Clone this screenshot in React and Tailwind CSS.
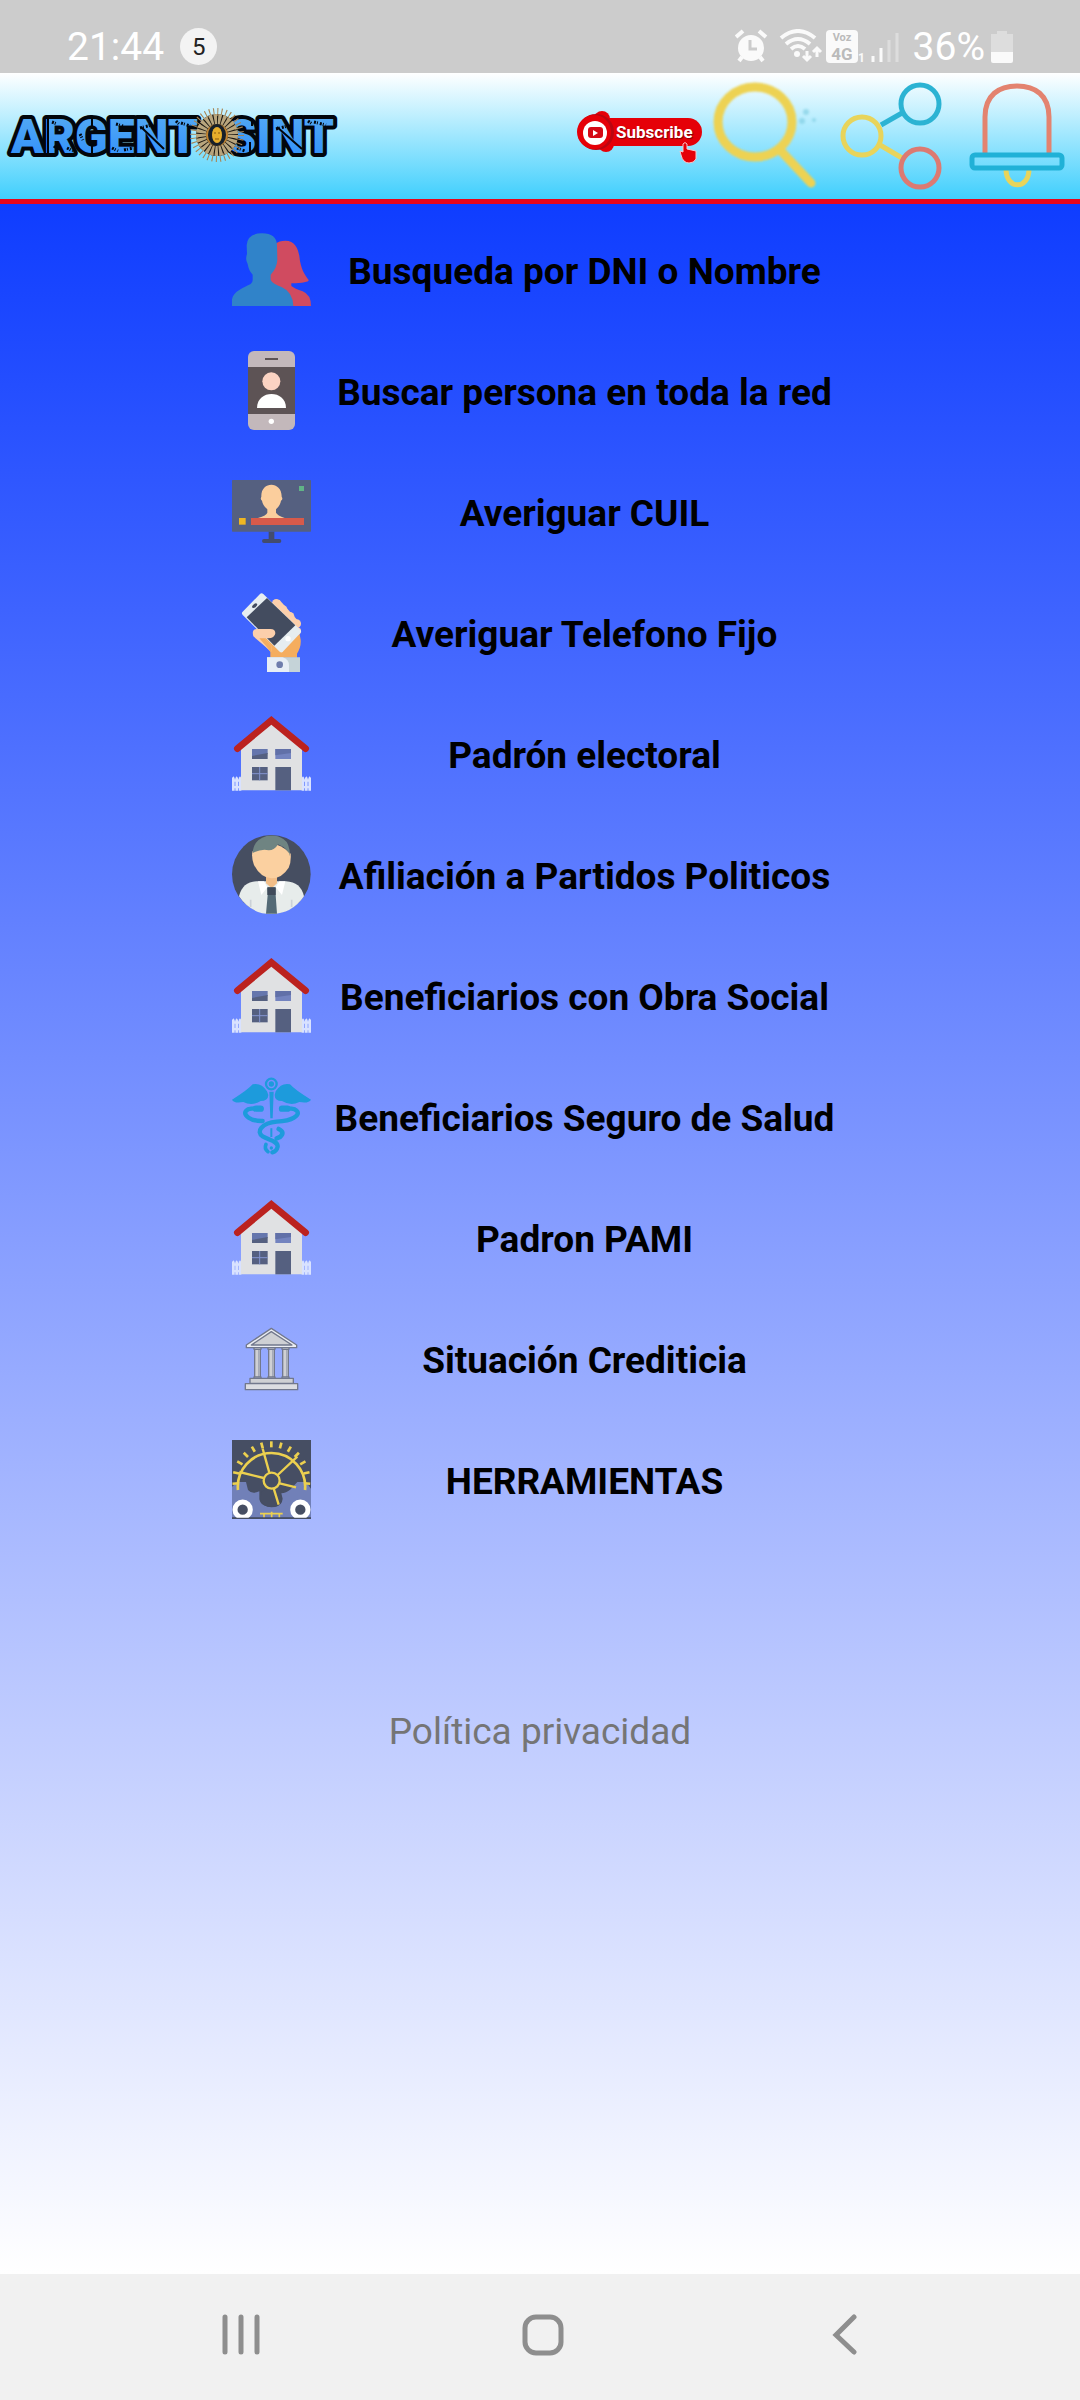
import React from 'react';

const PeopleIcon = () => (
  <svg viewBox="0 0 237 237" className="size-full">
    <path d="M128 42Q142 32 160 32C188 32 198 54 202 78C206 118 218 134 230 150Q232 158 178 160V168Q188 176 212 184Q237 194 237 228H150L110 150Z" fill="#d04b60" />
    <path d="M0 228V208C4 184 36 172 56 162Q62 158 62 150V134Q50 122 47 102Q39 88 45 72L44 46Q46 10 90 10Q134 10 135 46L136 90Q134 116 116 134V150Q122 162 150 172Q182 186 184 228Z" fill="#3083c9" />
  </svg>
);

const PhoneContactIcon = () => (
  <svg viewBox="0 0 237 237" className="size-full">
    <rect x="48" width="141" height="237" rx="18" fill="#c3b8bb" />
    <rect x="48" y="48" width="141" height="141" fill="#5d5355" />
    <rect x="99" y="21" width="39" height="6" fill="#5d5355" />
    <circle cx="118" cy="91" r="27" fill="#fbd3c3" />
    <path d="M75 171C75 115 162 115 162 171Z" fill="#fff" />
    <circle cx="118" cy="211" r="8" fill="#fff" />
  </svg>
);

const MonitorIcon = () => (
  <svg viewBox="0 0 237 237" className="size-full">
    <rect y="24" width="237" height="155" rx="2" fill="#556080" />
    <path d="M110 179H127V201H142Q148 201 148 207T142 213H96Q90 213 90 207T96 201H110Z" fill="#434c6d" />
    <path d="M106 112Q92 100 90 86Q84 82 88 74C86 26 150 26 149 74Q154 82 147 86Q145 100 132 112V122Q136 130 158 138H78Q104 130 106 122Z" fill="#fbce9d" />
    <rect x="57" y="138" width="159" height="21" fill="#d75a4a" />
    <rect x="21" y="138" width="20" height="20" fill="#efb622" />
    <rect x="201" y="42" width="15" height="15" fill="#61b487" />
  </svg>
);

const HandPhoneIcon = () => (
  <svg viewBox="0 0 237 237" className="size-full">
    <path d="M62 118L115 176V194H195V182Q208 162 206 140L196 90L100 100Z" fill="#f5ad5e" />
    <g fill="#fccfab">
      <circle cx="133" cy="31" r="13" />
      <circle cx="153" cy="50" r="13" />
      <circle cx="174" cy="70" r="13" />
      <circle cx="194" cy="92" r="13" />
      <circle cx="196" cy="114" r="11" />
      <path d="M122 38L142 20L206 92L190 110Z" />
    </g>
    <path d="M89 8L37 61L148 171L200 115Z" fill="#e6edf0" stroke="#e6edf0" strokeWidth="14" strokeLinejoin="round" />
    <path d="M105 15L44 73L127 158L190 97Z" fill="#434c5f" />
    <ellipse cx="68" cy="38" rx="9" ry="5" transform="rotate(-40 68 38)" fill="#434c5f" />
    <circle cx="168" cy="137" r="8" fill="#fff" />
    <path d="M75 108H115Q130 108 130 121Q128 136 108 136H98L118 158V176L64 130Q58 108 75 108Z" fill="#fccfab" />
    <path d="M82 136H98L118 158V178Z" fill="#f5ad5e" />
    <path d="M105 193H204V237H105Z" fill="#c5d3d8" />
    <path d="M105 193H152Q171 198 171 218V237H105Z" fill="#e7eef5" />
    <circle cx="143" cy="215" r="10" fill="#6f7dac" />
  </svg>
);

const HouseIcon = () => (
  <svg viewBox="0 0 237 237" className="size-full">
    <g fill="#d9e2ff">
      <path d="M0 192L4 187L8 192V230H0ZM10 192L14 187L18 192V230H10ZM20 192L24 187L28 192V230H20ZM209 192L213 187L217 192V230H209ZM219 192L223 187L227 192V230H219ZM229 192L233 187L237 192V230H229Z" />
      <path d="M0 196H28V203H0ZM0 216H28V223H0ZM209 196H237V203H209ZM209 216H237V223H209Z" />
    </g>
    <path d="M27 229V102L118 28L210 102V229Z" fill="#e0e1e3" />
    <path d="M16 104L118 19L221 104" fill="none" stroke="#bb221f" strokeWidth="20" strokeLinecap="round" />
    <path d="M60 105H107V120L60 128Z" fill="#6576ad" />
    <path d="M60 126L107 117V135H60Z" fill="#556080" />
    <path d="M130 105H177V135H130Z" fill="#7383bf" />
    <path d="M130 105H177V117L130 124Z" fill="#6170a8" />
    <path d="M130 159H177V229H130Z" fill="#556080" />
    <path d="M60 159H107V199H60Z" fill="#556080" />
    <path d="M83 159V199M60 179H107" stroke="#8394cf" strokeWidth="3" />
  </svg>
);

const PoliticianIcon = () => (
  <svg viewBox="0 0 237 237" className="size-full">
    <circle cx="118" cy="118" r="118" fill="#464e61" />
    <path d="M21 184Q32 140 74 139H162Q206 141 216 184Q180 237 118 237T21 184Z" fill="#e7eceb" />
    <path d="M102 120H135V145L119 160L102 145Z" fill="#f2bd87" />
    <path d="M61 50Q118 0 176 56Q178 82 170 98Q150 130 118 130Q86 128 66 90Q58 70 61 50Z" fill="#fbd0a0" />
    <path d="M62 54Q64 14 104 3Q132 -2 154 12Q174 24 174 64Q168 40 138 28Q128 46 110 46Q90 40 62 54Z" fill="#6f8482" />
    <path d="M106 157H131V180L135 236H102L107 180Z" fill="#546a76" />
    <path d="M106 157H131V180H106Z" fill="#3f4a5a" />
    <path d="M78 139H96L106 157L88 180ZM142 139H160L150 180L131 157Z" fill="#fff" />
    <path d="M56 194V216M179 194V216" stroke="#cbd1d8" strokeWidth="5" />
  </svg>
);

const CaduceusIcon = () => (
  <svg viewBox="0 0 237 237" className="size-full" fill="none" stroke="#1d9bdc" strokeLinecap="round">
    <circle cx="118" cy="21" r="16" strokeWidth="7" />
    <circle cx="118" cy="21" r="8" fill="#1d9bdc" stroke="none" />
    <path d="M105 43Q88 16 62 22Q46 40 0 68Q6 80 34 75Q60 88 86 72Q108 72 109 54ZM131 43Q148 16 174 22Q190 40 237 68Q230 80 202 75Q176 88 150 72Q128 72 128 54Z" fill="#1d9bdc" stroke="none" />
    <path d="M112 44H125L122 124H115ZM115 154H121V180H115Z" fill="#1d9bdc" stroke="none" />
    <path d="M88 95Q62 92 48 97Q30 108 50 122Q66 133 92 132" strokeWidth="13" />
    <path d="M72 95H86M150 95H166" strokeWidth="19" />
    <path d="M150 95Q174 92 188 97Q208 108 186 122Q170 132 134 134C90 138 70 164 92 178C112 190 138 192 137 209Q134 223 121 226" strokeWidth="13" />
    <path d="M140 156Q160 166 144 180L134 184" strokeWidth="14" />
    <path d="M102 202Q96 216 108 224" strokeWidth="11" />
    <circle cx="118" cy="213" r="5" fill="#1d9bdc" stroke="none" />
  </svg>
);

const BankIcon = () => (
  <svg viewBox="0 0 237 237" className="size-full" fill="#cfd0d4" stroke="#72788d" strokeWidth="4" strokeLinejoin="round">
    <path d="M43 78L118 28L194 78V86H43Z" fill="#eceef3" />
    <path d="M58 78L118 38L180 78Z" />
    {[66, 108, 150].map((x) => (
      <g key={x}>
        <path d={`M${x + 2} 90H${x + 19}V176H${x + 2}Z`} />
        <path d={`M${x + 14} 92V174`} stroke="#a6aab8" />
        <path d={`M${x} 86H${x + 21}V91H${x}ZM${x} 174H${x + 21}V180H${x}Z`} />
      </g>
    ))}
    <path d="M54 178H184V193H54Z" />
    <path d="M40 194H197V212H40Z" fill="#dcdde2" />
  </svg>
);

const GearsIcon = () => (
  <svg viewBox="0 0 237 237" className="size-full">
    <rect width="237" height="237" fill="#464e63" />
    <path d="M0 140L18 126H42L48 150Q60 164 82 154V178Q86 198 108 200H128Q150 198 152 176L148 160Q162 160 176 148L196 126H222L237 146V232H0Z" fill="#7180b8" />
    <path d="M88 156Q112 138 134 156L150 170V182Q142 202 118 202T86 180Z" fill="#464e63" />
    <g fill="none" stroke="#ecd04f">
      <path d="M18 150A101 101 0 1 1 219 150" strokeWidth="8" />
      {[-95, -78, -61, -45, -30, -15, 0, 15, 30, 45, 61, 78, 95].map((a) => (
        <path key={a} d="M118 4V22" strokeWidth="8" transform={`rotate(${a} 118 121)`} />
      ))}
      <circle cx="119" cy="122" r="24" strokeWidth="7" />
      <path d="M112 98L92 26M137 105L196 50M95 114L22 96M143 130L192 142M125 145L140 194" strokeWidth="7" />
      <path d="M84 221H152M96 232V221M119 232V215M142 232V221" strokeWidth="5" />
    </g>
    <g fill="#464e63" stroke="#fff" strokeWidth="15">
      <circle cx="32" cy="209" r="23" />
      <circle cx="205" cy="209" r="23" />
    </g>
    <path d="M0 235H237" stroke="#464e63" strokeWidth="4" />
  </svg>
);

const menuItems = [
  { label: 'Busqueda por DNI o Nombre', Icon: PeopleIcon },
  { label: 'Buscar persona en toda la red', Icon: PhoneContactIcon },
  { label: 'Averiguar CUIL', Icon: MonitorIcon },
  { label: 'Averiguar Telefono Fijo', Icon: HandPhoneIcon },
  { label: 'Padrón electoral', Icon: HouseIcon },
  { label: 'Afiliación a Partidos Politicos', Icon: PoliticianIcon },
  { label: 'Beneficiarios con Obra Social', Icon: HouseIcon },
  { label: 'Beneficiarios Seguro de Salud', Icon: CaduceusIcon },
  { label: 'Padron PAMI', Icon: HouseIcon },
  { label: 'Situación Crediticia', Icon: BankIcon },
  { label: 'HERRAMIENTAS', Icon: GearsIcon }
];

function StatusBar() {
  return (
    <div className="h-[73px] bg-[#cccccc] px-[67px] pt-5 flex items-center justify-between text-white">
      <div className="flex items-center gap-4">
        <span className="text-[39px] leading-[48px]">21:44</span>
        <span className="size-[37px] rounded-full bg-[#f3f3f3] text-[#222222] text-2xl flex items-center justify-center">5</span>
      </div>

      <div className="flex items-center">
        <svg viewBox="0 0 166 36" className="w-[166px] h-[36px] mr-3" fill="none" stroke="#fafafa">
          {/* Alarm */}
          <circle cx="16" cy="19" r="13" fill="#fafafa" stroke="none" />
          <path d="M1 8L8 2M24 2L31 8M7 28L4 32M25 28L28 32" strokeWidth="4" />
          <path d="M15 11V20H22" stroke="#cccccc" strokeWidth="3" />
          {/* Wifi */}
          <path d="M46 9Q63 -5 80 9M51 15Q63 5 75 15M56 20Q63 14 70 20" strokeWidth="4" />
          <circle cx="62" cy="25" r="3" fill="#fafafa" stroke="none" />
          <path d="M72 22V30M68 27L72 31L76 27M82 28V20M78 23L82 19L86 23" strokeWidth="3" />
          {/* VoLTE badge */}
          <rect x="91" y="1" width="32" height="33" rx="4" fill="#fafafa" stroke="none" />
          <g stroke="none" className="font-['Roboto'] font-bold">
            <text x="107" y="12" textAnchor="middle" fontSize="11" fill="#bbbbbb">Voz</text>
            <text x="107" y="31" textAnchor="middle" fontSize="17" fill="#bbbbbb">4G</text>
            <text x="123" y="33" fontSize="12" fill="#fafafa">1</text>
          </g>
          {/* Signal */}
          <path d="M138 27V33M146 19V33" strokeWidth="3" />
          <path d="M154 11V33M162 4V33" stroke="#dddddd" strokeWidth="3" />
        </svg>
        <span className="text-[39px] leading-[48px] mr-1.5">36%</span>
        <svg viewBox="0 0 22 36" className="w-[22px] h-[36px]">
          <path d="M6 2H16V5H22V24H0V5H6Z" fill="#dddddd" />
          <path d="M0 23H22V32Q22 34 20 34H2Q0 34 0 32Z" fill="#fafafa" />
        </svg>
      </div>
    </div>
  );
}

function Logo() {
  return (
    <svg viewBox="0 0 340 126" className="w-[340px] h-[126px]" role="img" aria-label="ARGENTOSINT">
      <defs>
        <linearGradient id="logoFill" x1="0" y1="0" x2="0" y2="1">
          <stop offset="0" stopColor="#58adf2" />
          <stop offset="1" stopColor="#2d8dfc" />
        </linearGradient>
      </defs>
      <g className="font-['Roboto'] font-black" fontSize="48" fill="url(#logoFill)" stroke="#02060c" strokeWidth="8" strokeLinejoin="round" paintOrder="stroke">
        <text x="198" y="80" textAnchor="end">ARGENT</text>
        <text x="334" y="80" textAnchor="end">SINT</text>
      </g>
      {/* Stencil cuts and grunge */}
      <g stroke="#02060c" strokeWidth="2" fill="none">
        <path d="M48 45V81M92 45V55M92 67V81M141 54L164 76M252 45V53M250 69V81M277 54L302 76" />
        <path d="M52 49l5 2M67 75l6 3M54 73l4 4M80 61l3 6M116 51l7 2M112 75l6 3M124 77l9 -2M140 55l12 -3M181 50l9 3M176 48l3 3M237 75l8 3M276 56l12 -3M314 49l12 3M308 48l4 3" strokeWidth="3" strokeDasharray="2 1 1 2" />
      </g>
      {/* Sun */}
      <g transform="translate(217 62)">
        <circle r="21" fill="#1b1712" />
        <circle r="23" fill="none" stroke="#aa8350" strokeWidth="8" strokeDasharray="1 3" />
        <circle r="16" fill="none" stroke="#b8a57d" strokeWidth="10" strokeDasharray="3 1" />
        <circle r="11" fill="#c28431" />
        <ellipse rx="9" ry="11" fill="#17202a" />
        <ellipse rx="5" ry="8" fill="#e7ae2b" />
        <path d="M-3 -2H-1M1 -2H3M-2 4H2" stroke="#8a5a10" strokeWidth="1" />
      </g>
    </svg>
  );
}

function Header() {
  return (
    <header className="flex items-center justify-between border-b-[5px] border-[#e9051a] bg-linear-to-b/srgb from-white to-[#40cffd]">
      <Logo />

      <div className="flex">
        <button type="button" aria-label="Subscribe" className="size-[126px]">
          <svg viewBox="0 0 126 126" className="size-full">
            <g fill="#e50008">
              <circle cx="26" cy="46" r="8" />
              <circle cx="30" cy="71" r="8" />
              <rect x="16" y="45" width="110" height="28" rx="14" />
            </g>
            <circle cx="20" cy="59" r="18" fill="#b90611" />
            <circle cx="18" cy="59" r="17" fill="#e50008" />
            <circle cx="19" cy="60" r="12" fill="#fff" />
            <rect x="12" y="54" width="15" height="11" rx="3" fill="#d50a16" />
            <path d="M17 57L22 60L17 63Z" fill="#fff" />
            <text x="40" y="65" fontSize="17" fill="#fff" className="font-['Roboto'] font-bold [text-shadow:1px_1px_1px_#7d0006]">Subscribe</text>
            <path d="M107 71Q109 68 111 71V76L120 78V86Q118 90 113 90Q107 90 105 82L104 78L107 79Z" fill="#e50008" stroke="#f8c8cc" strokeWidth="1" />
          </svg>
        </button>

        <button type="button" aria-label="Buscar" className="size-[126px]">
          <svg viewBox="0 0 126 126" className="size-full blur-[1px]" fill="none" stroke="#edd253">
            <ellipse cx="53" cy="49" rx="37" ry="35" strokeWidth="9" />
            <path d="M79 78L109 110" strokeWidth="9" strokeLinecap="round" />
            <g fill="#7bcbe0" stroke="none" opacity="0.6">
              <circle cx="104" cy="39" r="3" />
              <circle cx="100" cy="48" r="3" />
              <circle cx="112" cy="47" r="2" />
            </g>
          </svg>
        </button>

        <button type="button" aria-label="Compartir" className="size-[126px]">
          <svg viewBox="0 0 126 126" className="size-full" fill="none" strokeWidth="5">
            <path d="M53 52L74 40" stroke="#2bb3d3" />
            <path d="M52 72L74 85" stroke="#e8d45b" />
            <circle cx="34" cy="63" r="19" stroke="#e8d45b" />
            <circle cx="92" cy="31" r="19" stroke="#2bb3d3" />
            <circle cx="92" cy="95" r="19" stroke="#dc7a72" />
          </svg>
        </button>

        <button type="button" aria-label="Notificaciones" className="size-[126px]">
          <svg viewBox="0 0 126 126" className="size-full" fill="none" strokeWidth="5">
            <path d="M31 80V44C31 22 45 13 63 13S95 22 95 44V80" stroke="#e3836f" />
            <path d="M52 96C52 117 75 117 75 96" stroke="#e8d45b" />
            <rect x="18" y="82" width="90" height="13" rx="3" stroke="#20b1d7" />
          </svg>
        </button>
      </div>
    </header>
  );
}

function NavBar() {
  return (
    <nav className="h-[126px] bg-[#f1f1f1] pl-1.5 pb-1 flex items-center justify-center">
      <button type="button" aria-label="Recientes" className="w-[28%] h-full flex items-center justify-center">
        <svg viewBox="0 0 42 42" className="size-[42px]" stroke="#8e8e8e" strokeWidth="5" strokeLinecap="round">
          <path d="M4 3V38M20 3V38M36 3V38" />
        </svg>
      </button>
      <button type="button" aria-label="Inicio" className="w-[28%] h-full flex items-center justify-center">
        <svg viewBox="0 0 42 42" className="size-[42px]" fill="none" stroke="#8e8e8e" strokeWidth="5">
          <rect x="3" y="3" width="36" height="36" rx="11" />
        </svg>
      </button>
      <button type="button" aria-label="Atrás" className="w-[28%] h-full flex items-center justify-center">
        <svg viewBox="0 0 42 42" className="size-[42px]" fill="none" stroke="#8e8e8e" strokeWidth="5" strokeLinecap="round">
          <path d="M31 3L13 21L31 38" />
        </svg>
      </button>
    </nav>
  );
}

export default function App() {
  return (
    <div className="min-h-screen flex flex-col font-['Roboto',sans-serif]">
      <StatusBar />
      <Header />

      <main className="flex-1 bg-linear-to-b/srgb from-[#0f3dff] to-white px-4 pt-[5px] flex flex-col items-center">
        <ul className="w-full max-w-[616px]">
          {menuItems.map(({ label, Icon }) => (
            <li key={label}>
              <button type="button" className="w-full h-[121px] flex items-center gap-2.5">
                <span className="size-[79px] shrink-0">
                  <Icon />
                </span>
                <span className="flex-1 pt-1 text-center text-[37px] leading-[48px] font-bold text-black whitespace-nowrap">
                  {label}
                </span>
              </button>
            </li>
          ))}
        </ul>

        <a href="#privacidad" className="mt-[168px] text-[37px] leading-[48px] text-[#757575]">
          Política privacidad
        </a>
      </main>

      <NavBar />
    </div>
  );
}
